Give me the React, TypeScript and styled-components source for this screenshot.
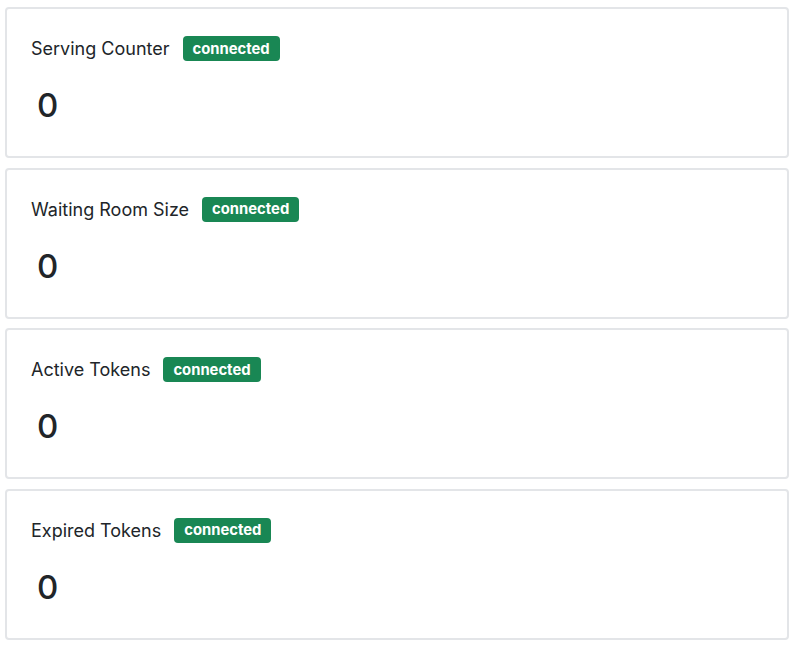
import * as React from 'react';
import styled, { createGlobalStyle } from 'styled-components';

const GlobalStyle = createGlobalStyle`
  body {
    margin: 0;
    background: #fff;
    font-family: Inter, 'Noto Sans', 'Liberation Sans', sans-serif;
    color: #212529;
  }
`;

const Page = styled.div`
  display: flex;
  flex-direction: column;
  gap: 9.5px;
  padding: 7px 5px;
`;

const Card = styled.div`
  box-sizing: border-box;
  height: 151px;
  border: 2px solid #e3e5e8;
  border-radius: 4px;
  padding: 27px 24px 0;
  display: flex;
  flex-direction: column;
`;

const Header = styled.div`
  display: flex;
  align-items: center;
  gap: 13px;
  height: 25px;
`;

const Title = styled.span`
  font-size: 18px;
  font-weight: 400;
  color: #212529;
`;

const Badge = styled.span`
  display: inline-flex;
  align-items: center;
  height: 25px;
  padding: 0 10px;
  border-radius: 4px;
  background: #198754;
  color: #fff;
  font-size: 14.8px;
  font-weight: 700;
`;

const Value = styled.div`
  margin-top: 24px;
  padding-left: 6px;
  font-size: 33px;
  font-weight: 500;
  line-height: 40px;
  color: #212529;
`;

const stats = [
  { title: 'Serving Counter', value: 0 },
  { title: 'Waiting Room Size', value: 0 },
  { title: 'Active Tokens', value: 0 },
  { title: 'Expired Tokens', value: 0 },
];

export default function App() {
  return (
    <>
      <GlobalStyle />
      <Page>
        {stats.map(s => (
          <Card key={s.title}>
            <Header>
              <Title>{s.title}</Title>
              <Badge>connected</Badge>
            </Header>
            <Value>{s.value}</Value>
          </Card>
        ))}
      </Page>
    </>
  );
}
